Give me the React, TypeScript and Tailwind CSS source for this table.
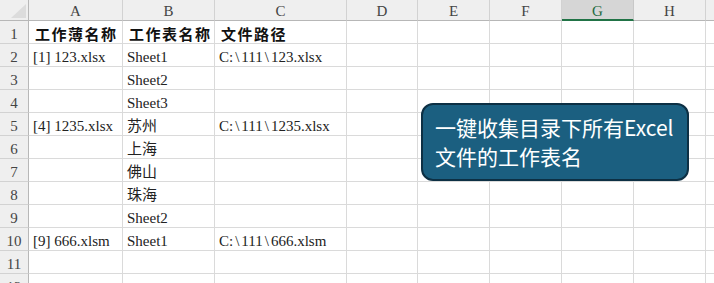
import React from 'react';

const cols = ['A', 'B', 'C', 'D', 'E', 'F', 'G', 'H', 'I'];
const colWidths = [94, 92, 132, 71, 72, 72, 72, 72, 72];

type Row = { a?: string; b?: string; c?: string; bold?: boolean };

const rows: Row[] = [
  { a: '工作薄名称', b: '工作表名称', c: '文件路径', bold: true },
  { a: '[1] 123.xlsx', b: 'Sheet1', c: 'C:\\111\\123.xlsx' },
  { b: 'Sheet2' },
  { b: 'Sheet3' },
  { a: '[4] 1235.xlsx', b: '苏州', c: 'C:\\111\\1235.xlsx' },
  { b: '上海' },
  { b: '佛山' },
  { b: '珠海' },
  { b: 'Sheet2' },
  { a: '[9] 666.xlsm', b: 'Sheet1', c: 'C:\\111\\666.xlsm' },
  {},
  {},
];

const serif = "font-['Liberation_Serif','Noto_Sans_CJK_SC',serif]";

// paths render with a little air around each backslash
function PathText({ value }: { value: string }) {
  const parts = value.split('\\');
  return (
    <>
      {parts.map((p, i) => (
        <React.Fragment key={i}>
          {i > 0 && <span className="px-[2px]">\</span>}
          {p}
        </React.Fragment>
      ))}
    </>
  );
}

export default function App() {
  return (
    <div className="relative h-[283px] w-[714px] overflow-hidden bg-white">
      {/* column headers */}
      <div className="flex h-[21px]">
        <div className="relative w-[29px] shrink-0 border-r border-b border-[#b7b7b7] bg-[#efefef]">
          <svg className="absolute left-[11px] top-[4px]" width="15" height="14" viewBox="0 0 15 14">
            <polygon points="15,0 15,14 0,14" fill="#dcdcdc" />
          </svg>
        </div>
        {cols.map((c, i) => {
          const selected = c === 'G';
          return (
            <div
              key={c}
              style={{ width: colWidths[i] }}
              className={`flex shrink-0 justify-center border-r pt-[2px] text-[15px] leading-[18px] ${serif} ${
                selected
                  ? 'border-b-2 border-r-[#c8c8c8] border-b-[#217346] bg-[#d6d6d6] text-[#1e6b40]'
                  : 'border-b border-r-[#d2d2d2] border-b-[#b7b7b7] bg-[#efefef] text-[#444]'
              }`}
            >
              {c !== 'I' && c}
            </div>
          );
        })}
      </div>

      {/* body rows */}
      {rows.map((r, ri) => (
        <div key={ri} className="flex h-[23px]">
          <div
            className={`flex w-[29px] shrink-0 justify-center border-r border-b border-r-[#b7b7b7] border-b-[#d2d2d2] bg-[#efefef] pt-[3px] text-[15px] leading-[20px] text-[#444] ${serif}`}
          >
            {ri + 1}
          </div>
          {cols.map((c, ci) => {
            const text = ci === 0 ? r.a : ci === 1 ? r.b : ci === 2 ? r.c : undefined;
            return (
              <div
                key={c}
                style={{ width: colWidths[ci] }}
                className="flex shrink-0 items-start whitespace-nowrap border-r border-b border-[#dadada] pl-[4px] pt-[3px]"
              >
                {text &&
                  (r.bold ? (
                    <span className="pl-[2px] font-['Noto_Sans_CJK_SC',sans-serif] text-[15px] font-bold leading-[20px] tracking-[1.5px] text-[#111]">
                      {text}
                    </span>
                  ) : (
                    <span className={`${serif} text-[15px] leading-[20px] text-[#222]`}>
                      {ci === 2 ? <PathText value={text} /> : text}
                    </span>
                  ))}
              </div>
            );
          })}
        </div>
      ))}

      {/* callout shape floating over the sheet */}
      <div className="absolute left-[421px] top-[103px] flex h-[78px] w-[268px] flex-col justify-center rounded-[12px] border-2 border-[#0d3044] bg-[#1b5f80] px-[12px] font-['Noto_Sans_CJK_SC',sans-serif] text-[21px] leading-[29px] text-white">
        <div>一键收集目录下所有Excel</div>
        <div>文件的工作表名</div>
      </div>
    </div>
  );
}
